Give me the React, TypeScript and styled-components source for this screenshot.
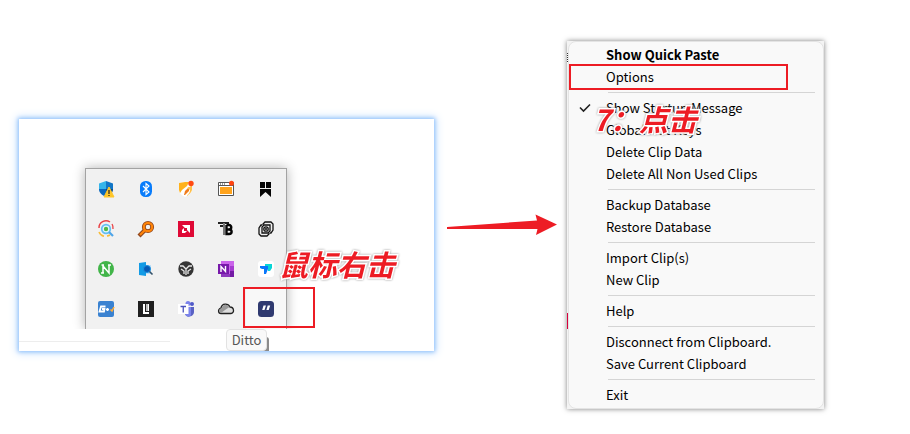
import React from 'react';
import styled, { createGlobalStyle } from 'styled-components';

const GlobalStyle = createGlobalStyle`
  *, *::before, *::after { box-sizing: border-box; }
  body { margin: 0; background: #fff; color: #000; font-family: "Noto Sans", "Noto Sans CJK SC", sans-serif; }
  button { font: inherit; color: inherit; background: none; border: 0; padding: 0; margin: 0; }
`;

const Page = styled.main`
  display: flex;
  align-items: flex-start;
  padding: 41px 86px 24px 19px;
`;

const TrayPanel = styled.section`
  position: relative;
  flex: 1;
  min-width: 320px;
  margin-top: 78px;
  padding: 49px 66px 0;
  background: #fff;
  box-shadow: 0 0 4px 1px #8fc1fb, 0 0 9px 2px #cfe4fd;
`;

const TrayClip = styled.div`
  position: relative;
  width: 202px;
  clip-path: inset(-14px -40px 0 -14px);
`;

const Tray = styled.div`
  display: grid;
  grid-template-columns: repeat(5, 40px);
  grid-auto-rows: 40px;
  border: 1px solid #a3a3a3;
  border-bottom: 0;
  background: #f1f1f1;
  box-shadow: 0 0 11px rgba(0, 0, 0, 0.3);
`;

const TrayButton = styled.button<{ $active?: boolean }>`
  display: grid;
  place-items: center;
  background: ${({ $active }) => ($active ? '#f8f8f8' : 'transparent')};
  svg { display: block; overflow: visible; }
`;

const Footer = styled.div`
  display: flex;
  height: 22px;
  margin-left: -66px;
`;

const FooterLine = styled.div`
  width: 151px;
  height: 13px;
  border-bottom: 1px solid #ededed;
`;

const Tooltip = styled.div`
  margin-left: 56px;
  width: 41px;
  height: 22px;
  border: 1px solid #e2e2e2;
  border-radius: 4px;
  background: #f9f9f9;
  box-shadow: 3px 7px 0 -1px #8b8b8b;
  clip-path: inset(0 -4px 0 0);
  color: #575757;
  font: 13px/20px "Noto Sans CJK SC", sans-serif;
  text-align: center;
`;

const Highlight = styled.div<{ $x: number; $y: number; $w: number; $h: number }>`
  position: absolute;
  left: ${({ $x }) => $x}px;
  top: ${({ $y }) => $y}px;
  width: ${({ $w }) => $w}px;
  height: ${({ $h }) => $h}px;
  border: 2px solid #ed1c24;
  pointer-events: none;
`;

const Note = styled.strong<{ $x: number; $y: number }>`
  position: absolute;
  left: ${({ $x }) => $x}px;
  top: ${({ $y }) => $y}px;
  color: #ed1c24;
  font: italic 700 29px/36px "Noto Sans CJK SC", sans-serif;
  white-space: nowrap;
  -webkit-text-stroke: 3px #fff;
  paint-order: stroke fill;
  filter: drop-shadow(0 0 1px #999);
  pointer-events: none;
`;

const ArrowSlot = styled.div`
  flex: none;
  width: 133px;
  padding: 173px 10px 0 13px;
  svg { display: block; }
`;

const MenuFrame = styled.div`
  position: relative;
  flex: none;
  width: 257px;
  background:
    linear-gradient(#d8003c, #d8003c) 0 272px / 1px 16px no-repeat,
    repeating-linear-gradient(#333 0 1px, #fff 1px 2px) 0 12px / 1px 10px no-repeat,
    #f3f3f3;
  box-shadow: 0 0 5px rgba(0, 0, 0, 0.5);
`;

const Menu = styled.div`
  margin-left: 1px;
  padding: 2px 8px 2px 0;
  border: 1px solid #e4e4e4;
  border-radius: 8px;
  background: #f9f9f9;
`;

const MenuItem = styled.button<{ $bold?: boolean }>`
  display: grid;
  grid-template-columns: 37px 1fr;
  align-items: center;
  width: 100%;
  height: 22px;
  font-size: 13px;
  line-height: 22px;
  font-family: "Noto Sans CJK SC", "Noto Sans", sans-serif;
  font-weight: ${({ $bold }) => ($bold ? 700 : 400)};
  text-align: left;
  white-space: nowrap;
  svg { display: block; margin-left: 10px; }
`;

const Separator = styled.hr`
  height: 1px;
  margin: 4px 0 4px 39px;
  border: 0;
  background: #d5d5d5;
`;

const icons: { name: string; art: React.ReactNode }[] = [
  {
    name: 'Windows Security',
    art: (
      <>
        <path d="M8 0 15 2.5V8H8z" fill="#1276c6" />
        <path d="M8 0 1 2.5V8H8z" fill="#35b5ea" />
        <path d="M1 8h7v8C4 14 1 12 1 8z" fill="#0a67bd" />
        <path d="M8 8h7c0 4-3 6-7 8z" fill="#064b91" />
        <path d="M11 6 16 16H6z" fill="#ffc629" stroke="#ffc629" strokeLinejoin="round" />
        <path d="M11 9v4M11 14v1" stroke="#222" strokeWidth="1.2" />
      </>
    ),
  },
  {
    name: 'Bluetooth',
    art: (
      <>
        <rect x="2" width="12" height="16" rx="5.5" fill="#087cfb" />
        <path d="m5 5 6 6-3 2.5v-11L11 5l-6 6" fill="none" stroke="#fff" strokeWidth="1.1" />
      </>
    ),
  },
  {
    name: 'Fire protection',
    art: (
      <>
        <path d="M1 2 7 1l7 1v6c0 4-3 6-7 8-4-2-6-4-6-8z" fill="#fff" />
        <path d="M1 2 7 1l4 0-2 4-5 4-2 3-1-3z" fill="#ffb21c" />
        <path d="m6 14 1-4 4-4v4l-4 4z" fill="#f07c1c" />
        <path d="M9 7c3-1 4-2 5-3v5c-1 3-3 5-6 6 3-2 4-4 4-6z" fill="#ffc04a" />
        <circle cx="13" cy="2.5" r="2.7" fill="#ff4a12" />
      </>
    ),
  },
  {
    name: 'Window manager',
    art: (
      <>
        <path d="M.5 1.5h15v13H.5z" fill="#fff" stroke="#555" />
        <path d="M1 4.5h14" stroke="#555" />
        <path d="M2 3h1M4 3h1M6 3h1" stroke="#333" />
        <path d="M2 6h12v7H2z" fill="#ffa31c" />
        <circle cx="13.5" cy="2.3" r="2.5" fill="#ff4512" />
      </>
    ),
  },
  { name: 'Bookmarks', art: <path d="M2 1h5v6H2zM8 1h5v6H8zM2 8h11v8l-5.5-5L2 16z" fill="#050505" /> },
  {
    name: 'Search everywhere',
    art: (
      <>
        <path d="M1 7a7 7 0 0 1 11-6" fill="none" stroke="#e94347" strokeWidth="1.5" />
        <path d="M14 3a7 7 0 0 1 1 5" fill="none" stroke="#e94347" strokeWidth="1.3" />
        <path d="M1 11a7 7 0 0 0 5 4.3M9 15a7 7 0 0 0 3-1" fill="none" stroke="#f8bd39" strokeWidth="1.5" />
        <circle cx="8" cy="8" r="4.3" fill="#e7f6fd" stroke="#63bff2" strokeWidth="1.7" />
        <circle cx="8" cy="8" r="2.2" fill="#54b947" />
        <path d="m11 11 4 4" stroke="#4da4e9" strokeWidth="2.2" />
      </>
    ),
  },
  {
    name: 'Everything',
    art: (
      <>
        <circle cx="10" cy="6" r="4.2" fill="none" stroke="#8f461d" strokeWidth="3.8" />
        <path d="m7 9-6 6" stroke="#8f461d" strokeWidth="4.2" />
        <circle cx="10" cy="6" r="4.2" fill="none" stroke="#ff8408" strokeWidth="2.2" />
        <path d="m7 9-5 5" stroke="#ff8408" strokeWidth="2.2" />
      </>
    ),
  },
  {
    name: 'AMD Software',
    art: (
      <>
        <path d="M0 0h16v16H0z" fill="#df0936" />
        <path d="M4 4h8v8L9 9V7H7zM6 7v3h3l-2 2H4V9z" fill="#fff" />
      </>
    ),
  },
  {
    name: 'Text tool',
    art: (
      <>
        <path d="M0 2h11M2 5h4" stroke="#222" strokeWidth="2" />
        <path d="M6 2v12" stroke="#777" strokeWidth="2" />
        <path d="M8.5 4v9H11c3.500 0 3.500-4.500 0-4.500 3 0 3-4.500 0-4.500H8.500m0 4.500H11" fill="none" stroke="#050505" strokeWidth="2.4" />
      </>
    ),
  },
  {
    name: 'Spiral',
    art: (
      <g fill="none" stroke="#111" strokeWidth="1.3">
        <path d="M5 4V3l2-2h6l2 2v6l-2 3h-1" />
        <path d="M11 12v1l-2 2H3l-2-2V7l2-3h1" />
        <path d="M4 10V6l2-2h6v6l-2 2H4z" />
        <circle cx="8" cy="8" r="2.2" />
        <circle cx="8" cy="8" r=".4" fill="#111" />
      </g>
    ),
  },
  {
    name: 'Neat client',
    art: (
      <>
        <circle cx="8" cy="8" r="8" fill="#42b549" />
        <path d="M5 12V5l6 7V4M3.5 4H6M10 4h3M3 12h3" fill="none" stroke="#fff" strokeWidth="1.5" />
      </>
    ),
  },
  {
    name: 'File search',
    art: (
      <>
        <path d="M1 2 8 1v14l-7-1z" fill="#139be5" />
        <path d="M8 4h5v9H8z" fill="#bde1fa" />
        <circle cx="9" cy="8" r="3.5" fill="#075ab5" stroke="#1c91df" />
        <path d="m11.5 10.5 3 3" stroke="#345269" strokeWidth="1.6" />
      </>
    ),
  },
  {
    name: 'Game controller',
    art: (
      <>
        <circle cx="8" cy="8" r="7.7" fill="#353535" />
        <path d="M2 5h3l3 3 3-3h3M8 8v6M3 8l3 2v3M13 8l-3 2v3" fill="none" stroke="#e7e7e7" strokeWidth="1.3" />
      </>
    ),
  },
  {
    name: 'OneNote',
    art: (
      <>
        <path d="M3 0h13v16H3z" fill="#ca64ea" />
        <path d="M12 5h4v5h-4z" fill="#a63bd0" />
        <path d="M12 10h4v6h-4z" fill="#741ba5" />
        <path d="M3 13h9v3H3z" fill="#8d39bd" />
        <path d="M0 3h11v10H0z" fill="#7719aa" />
        <path d="M3 11V5.500l4.500 5V5" fill="none" stroke="#fff" strokeWidth="1.4" />
      </>
    ),
  },
  {
    name: 'ToDesk',
    art: (
      <>
        <rect width="16" height="16" rx="3" fill="#fff" />
        <path d="M7 3h7v4l-2 3h-2V6H7z" fill="#08d6d7" />
        <path d="M2 5h8v3L8 13H6V8H4L2 7z" fill="#0877fb" />
      </>
    ),
  },
  {
    name: 'G++',
    art: (
      <>
        <rect width="16" height="16" rx="2" fill="#3a82d1" />
        <path d="M7.500 5.500H3L1.500 10.500H6l.5-2.500H4" fill="none" stroke="#fff" strokeWidth="1.8" />
        <path d="M8 8.500h3M9.500 7v3" stroke="#fff" strokeWidth="1.5" />
        <path d="m12.500 8.500 1.500 1.500 2-4" fill="none" stroke="#ffad3a" strokeWidth="1.6" />
      </>
    ),
  },
  {
    name: 'Lively',
    art: (
      <>
        <path d="M0 0h16v16H0z" fill="#202020" />
        <path d="M5 3h2v8h4v2H5zM8 3h3v7H8z" fill="#fff" />
        <path d="M9 3v7" stroke="#777" />
      </>
    ),
  },
  {
    name: 'Teams',
    art: (
      <>
        <circle cx="10" cy="2.5" r="2.5" fill="#7b83eb" />
        <circle cx="14" cy="3" r="2" fill="#5059c9" />
        <path d="M7 6h9v5c0 5-9 7-9 1z" fill="#5961c3" />
        <path d="M7 6h6v8c-2 3-6 1-6-2z" fill="#7b83eb" />
        <path d="M0 3h10.5v10H0z" fill="#fff" />
        <path d="M2.5 5.5H8M5.250 5v6.500" stroke="#4b53bc" strokeWidth="1.3" />
      </>
    ),
  },
  {
    name: 'OneDrive',
    art: (
      <>
        <path d="M3 12.500C0 12.500-.5 8 3 7c1-5 7-5 9-1 4.500 0 4.500 6.500 1 6.500z" fill="#ddd" stroke="#222" strokeWidth="1.3" />
        <path d="M3.500 7c2-4 6-4 8-1L7 9 3 12C0 11 1 8 3.500 7z" fill="#999" />
      </>
    ),
  },
  {
    name: 'Ditto',
    art: (
      <>
        <rect width="16" height="16" rx="3.5" fill="#303a70" />
        <path d="M5.500 4.500H8L6.500 9H4.200zM9.700 4.500h2.500L10.700 9H8.400z" fill="#fff" />
      </>
    ),
  },
];

type Entry = { label: string; bold?: boolean; checked?: boolean };

const groups: Entry[][] = [
  [{ label: 'Show Quick Paste', bold: true }, { label: 'Options' }],
  [
    { label: 'Show Startup Message', checked: true },
    { label: 'Global Hot Keys' },
    { label: 'Delete Clip Data' },
    { label: 'Delete All Non Used Clips' },
  ],
  [{ label: 'Backup Database' }, { label: 'Restore Database' }],
  [{ label: 'Import Clip(s)' }, { label: 'New Clip' }],
  [{ label: 'Help' }],
  [{ label: 'Disconnect from Clipboard.' }, { label: 'Save Current Clipboard' }],
  [{ label: 'Exit' }],
];

const Check = () => (
  <svg width="12" height="10" viewBox="0 0 12 10" aria-hidden="true">
    <path d="m1 4.5 3.5 3.5L11 1.500" fill="none" stroke="#222" strokeWidth="1.6" />
  </svg>
);

export default function App() {
  return (
    <>
      <GlobalStyle />
      <Page>
        <TrayPanel>
          <TrayClip>
            <Tray>
              {icons.map(({ name, art }) => (
                <TrayButton key={name} type="button" aria-label={name} $active={name === 'Ditto'}>
                  <svg width="16" height="16" viewBox="0 0 16 16" aria-hidden="true">
                    {art}
                  </svg>
                </TrayButton>
              ))}
            </Tray>
          </TrayClip>
          <Footer>
            <FooterLine />
            <Tooltip role="tooltip">Ditto</Tooltip>
          </Footer>
          <Highlight $x={224} $y={168} $w={72} $h={41} />
          <Note $x={260} $y={126}>鼠标右击</Note>
        </TrayPanel>
        <ArrowSlot>
          <svg width="110" height="22" viewBox="0 0 110 22" aria-hidden="true">
            <path d="M0 13 90 6.500 88.500 0.500 110 10.500 89 21l1.500-6L0 15z" fill="#ed1c24" />
          </svg>
        </ArrowSlot>
        <MenuFrame>
          <Menu role="menu">
            {groups.map((group, index) => (
              <React.Fragment key={group[0].label}>
                {index > 0 && <Separator />}
                {group.map(({ label, bold, checked }) => (
                  <MenuItem
                    key={label}
                    type="button"
                    role={checked ? 'menuitemcheckbox' : 'menuitem'}
                    aria-checked={checked}
                    $bold={bold}
                  >
                    <span>{checked && <Check />}</span>
                    <span>{label}</span>
                  </MenuItem>
                ))}
              </React.Fragment>
            ))}
          </Menu>
          <Highlight $x={2} $y={23} $w={219} $h={26} />
          <Note $x={26} $y={59}>7：点击</Note>
        </MenuFrame>
      </Page>
    </>
  );
}
